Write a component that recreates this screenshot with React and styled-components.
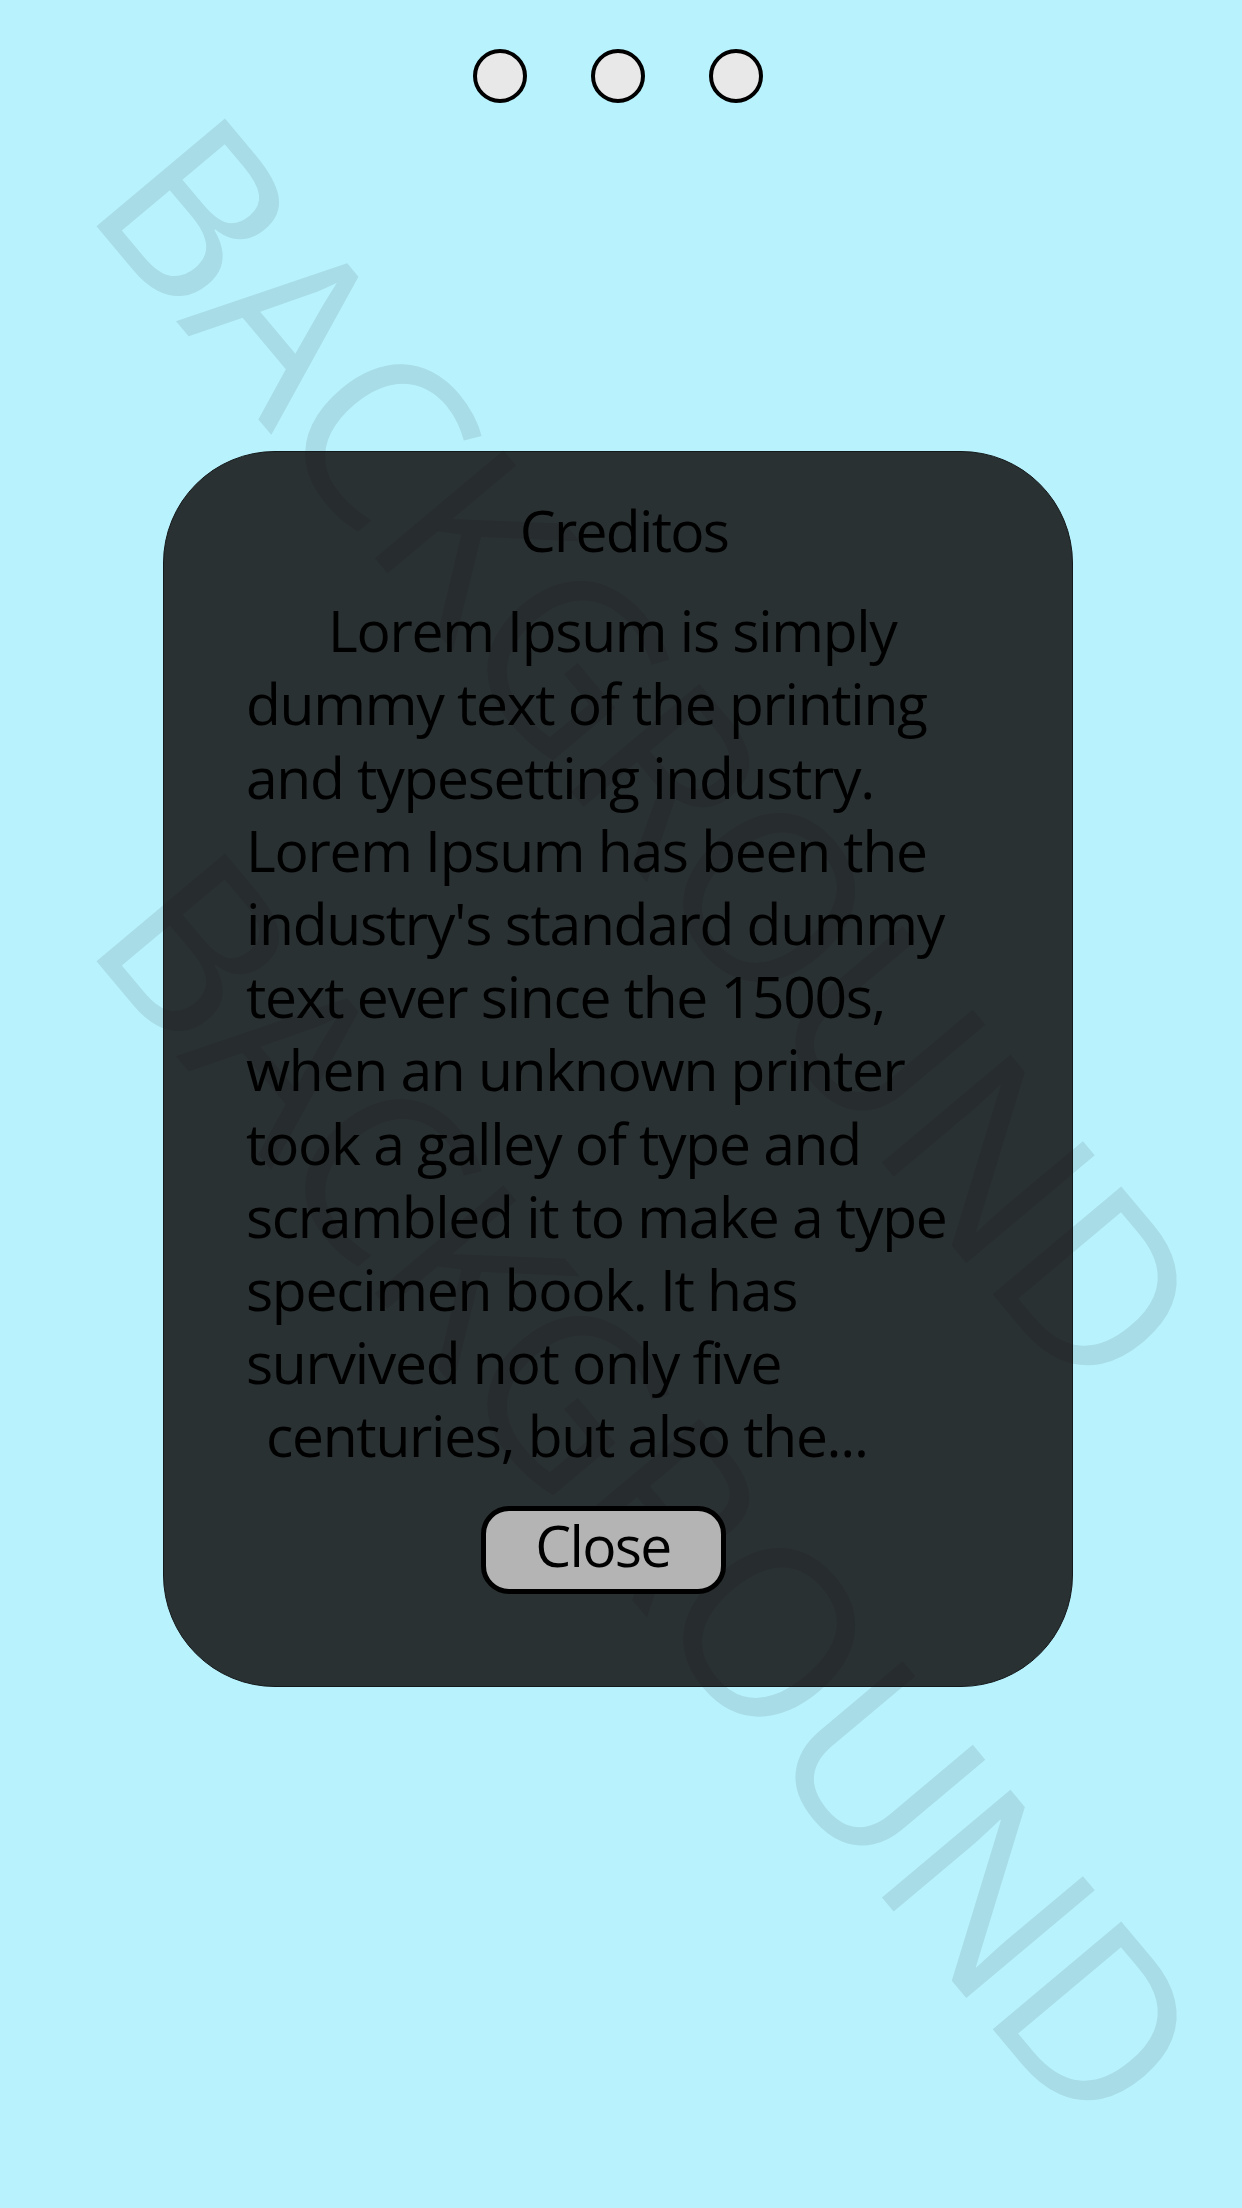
import React from "react";
import styled, { createGlobalStyle } from "styled-components";

const GlobalStyle = createGlobalStyle`
  html, body { margin: 0; padding: 0; }
  body { background: #b8f2fd; }
  * { box-sizing: border-box; }
`;

const Page = styled.div`
  position: relative;
  min-height: 100vh;
  overflow: hidden;
  background: #b8f2fd;
  font-family: "Open Sans", "Noto Sans", sans-serif;
`;

const Watermark = styled.div`
  position: absolute;
  left: 241px;
  top: ${(p) => p.$top}px;
  transform-origin: 0 0;
  transform: rotate(50deg);
  font-family: "Open Sans", "Noto Sans", sans-serif;
  font-size: 235px;
  line-height: 1;
  font-weight: 400;
  letter-spacing: -5px;
  color: #a8dce6;
  white-space: nowrap;
  pointer-events: none;
  user-select: none;
  z-index: 0;
`;

const Content = styled.div`
  position: relative;
  z-index: 1;
  display: flex;
  flex-direction: column;
  padding-top: 49px;
`;

const DotRow = styled.div`
  display: flex;
  justify-content: center;
  gap: 64px;
  padding-right: 6px;
`;

const Dot = styled.span`
  width: 54px;
  height: 54px;
  border-radius: 50%;
  background: #e8e8e8;
  border: 4px solid #000;
`;

const Panel = styled.section`
  width: 910px;
  margin: 348px 0 0 163px;
  padding: 42px 0 92px;
  border: 1px solid #14191b;
  border-radius: 112px;
  background: rgba(6, 0, 0, 0.8);
  display: flex;
  flex-direction: column;
  align-items: center;
`;

const Title = styled.h2`
  margin: 0 0 27px;
  align-self: stretch;
  padding-left: 12px;
  text-align: center;
  font-size: 57px;
  line-height: 73.2px;
  font-weight: 400;
  letter-spacing: -1.7px;
  color: #000;
`;

const Body = styled.p`
  margin: 0;
  align-self: stretch;
  padding-left: 82px;
  font-size: 57px;
  line-height: 73.2px;
  letter-spacing: -1.3px;
  color: #000;
  white-space: nowrap;
  text-indent: 82px;
`;

const Indent = styled.span`
  display: inline-block;
  width: ${(p) => p.$w}px;
`;

const CloseButton = styled.button`
  margin: 33px 30px 0 0;
  width: 245px;
  height: 88px;
  padding: 0 0 10px;
  border: 5px solid #000;
  border-radius: 28px;
  background: #b4b4b4;
  font-family: "Open Sans", "Noto Sans", sans-serif;
  font-size: 57px;
  line-height: 68px;
  letter-spacing: -1.7px;
  color: #000;
  cursor: pointer;
`;

const lines = [
  "Lorem Ipsum is simply",
  "dummy text of the printing",
  "and typesetting industry.",
  "Lorem Ipsum has been the",
  "industry's standard dummy",
  "text ever since the 1500s,",
  "when an unknown printer",
  "took a galley of type and",
  "scrambled it to make a type",
  "specimen book. It has",
  "survived not only five",
];

export default function App() {
  return (
    <>
      <GlobalStyle />
      <Page>
        <Watermark $top={75}>BACKGROUND</Watermark>
        <Watermark $top={810}>BACKGROUND</Watermark>
        <Content>
          <DotRow>
            <Dot />
            <Dot />
            <Dot />
          </DotRow>
          <Panel>
            <Title>Creditos</Title>
            <Body>
              {lines.map((l, i) => (
                <React.Fragment key={i}>
                  {l}
                  <br />
                </React.Fragment>
              ))}
              <Indent $w={20} />
              centuries, but also the...
            </Body>
            <CloseButton type="button">Close</CloseButton>
          </Panel>
        </Content>
      </Page>
    </>
  );
}
